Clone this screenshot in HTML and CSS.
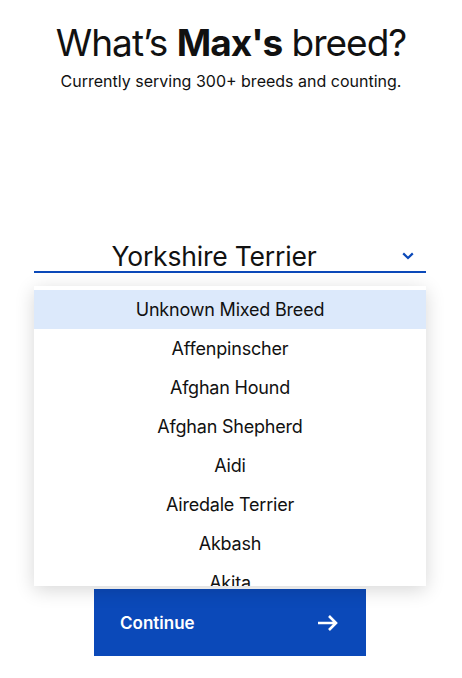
FILE: index.html
```html
<!DOCTYPE html>
<html lang="en">
<head>
<meta charset="utf-8">
<title>Breed</title>
<link rel="stylesheet" href="styles.css">
</head>
<body>
<main class="page">
  <h1 class="title">What’s <strong>Max's</strong> breed?</h1>
  <p class="subtitle">Currently serving 300+ breeds and counting.</p>
  <div class="field">
    <div class="select">
      <span class="select-value">Yorkshire Terrier</span>
      <svg class="chevron" width="12" height="8" viewBox="0 0 12 8" aria-hidden="true"><path d="M1.2 1.4 L6 6 L10.8 1.4" fill="none" stroke="#0b49b9" stroke-width="2.2"/></svg>
    </div>
    <ul class="menu">
      <li class="option active">Unknown Mixed Breed</li>
      <li class="option">Affenpinscher</li>
      <li class="option">Afghan Hound</li>
      <li class="option">Afghan Shepherd</li>
      <li class="option">Aidi</li>
      <li class="option">Airedale Terrier</li>
      <li class="option">Akbash</li>
      <li class="option">Akita</li>
    </ul>
  </div>
  <button class="continue" type="button">
    <span>Continue</span>
    <svg width="22" height="18" viewBox="0 0 22 18" aria-hidden="true"><path d="M1 9 H19 M12 2 L19 9 L12 16" fill="none" stroke="#fff" stroke-width="2.6"/></svg>
  </button>
</main>
</body>
</html>
```
FILE: styles.css
```css
* { box-sizing: border-box; }
html, body { margin: 0; padding: 0; background: #fff; }
body {
  font-family: Inter, "Liberation Sans", sans-serif;
  color: #111;
  width: 462px;
}
.page {
  display: flex;
  flex-direction: column;
  align-items: center;
  padding-top: 21px;
}
.title {
  margin: 0;
  font-size: 37px;
  line-height: 44px;
  font-weight: 400;
  letter-spacing: -1px;
}
.title strong { font-weight: 700; }
.subtitle {
  margin: 6px 0 0;
  font-size: 16px;
  line-height: 20px;
  letter-spacing: 0;
}
.field {
  position: relative;
  margin-top: 150px;
  width: 392px;
  align-self: flex-start;
  margin-left: 34px;
}
.select {
  position: relative;
  height: 32px;
  border-bottom: 2px solid #0b49b9;
  padding-right: 32px;
  text-align: center;
}
.select-value {
  font-size: 26.5px;
  line-height: 30px;
  letter-spacing: -0.2px;
}
.chevron {
  position: absolute;
  right: 12px;
  top: 11px;
}
.menu {
  position: absolute;
  top: 45px;
  left: 0;
  width: 392px;
  height: 300px;
  margin: 0;
  padding: 4px 0 0;
  list-style: none;
  background: #fff;
  overflow: hidden;
  box-shadow: 0 4px 18px rgba(0,0,0,0.16);
  z-index: 2;
}
.option {
  height: 39px;
  line-height: 39px;
  font-size: 18px;
  text-align: center;
  letter-spacing: -0.2px;
}
.option.active { background: #dce9fb; }
.continue {
  margin-top: 316px;
  align-self: flex-start;
  margin-left: 94px;
  width: 272px;
  height: 67px;
  background: #0b49b9;
  border: 0;
  color: #fff;
  font-family: inherit;
  font-size: 17px;
  font-weight: 600;
  display: flex;
  align-items: center;
  justify-content: space-between;
  padding: 0 27px 0 26px;
}
```
